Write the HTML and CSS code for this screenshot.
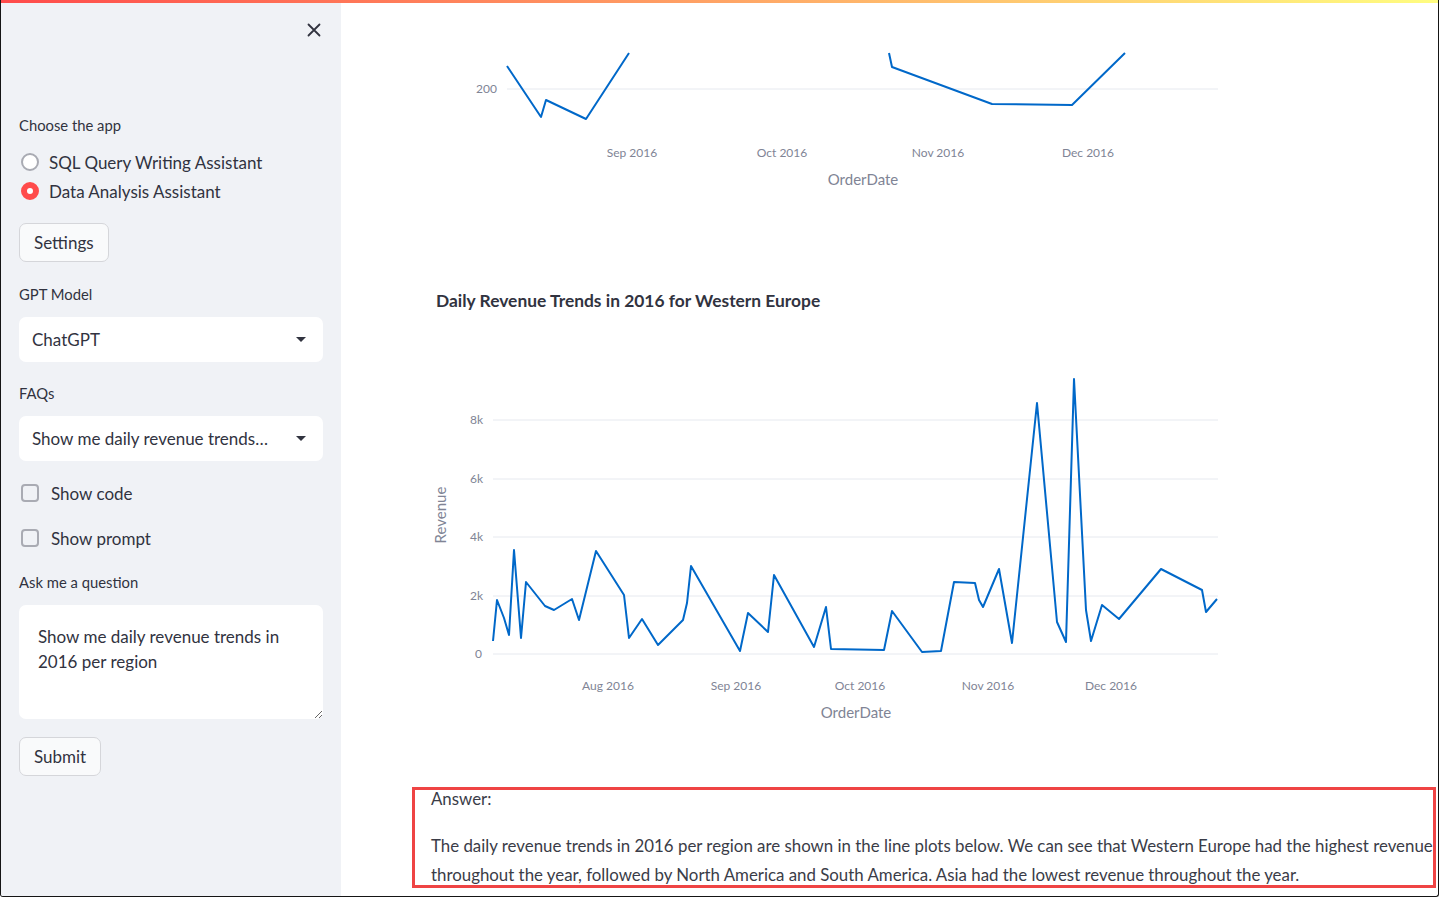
FILE: index.html
```html
<!DOCTYPE html>
<html lang="en">
<head>
<meta charset="utf-8">
<title>Data Analysis Assistant</title>
<link rel="stylesheet" href="styles.css">
</head>
<body>
<div class="frame">
  <div class="topbar"></div>
  <div class="app">
    <aside class="sidebar">
      <div class="sb-head">
        <button class="close" aria-label="Close sidebar">
          <svg width="14" height="14" viewBox="0 0 14 14"><path d="M1.5 1.5 L12.5 12.5 M12.5 1.5 L1.5 12.5" stroke="#31333f" stroke-width="1.8" stroke-linecap="round"/></svg>
        </button>
      </div>
      <div class="label">Choose the app</div>
      <div class="radios">
        <div class="radio"><span class="rdot"></span><span>SQL Query Writing Assistant</span></div>
        <div class="radio on"><span class="rdot"></span><span>Data Analysis Assistant</span></div>
      </div>
      <button class="btn btn-settings">Settings</button>
      <div class="label lbl-gpt">GPT Model</div>
      <div class="select"><span class="sel-text">ChatGPT</span><span class="caret"></span></div>
      <div class="label lbl-faq">FAQs</div>
      <div class="select"><span class="sel-text">Show me daily revenue trends…</span><span class="caret"></span></div>
      <div class="check chk-code"><span class="cbox"></span><span>Show code</span></div>
      <div class="check chk-prompt"><span class="cbox"></span><span>Show prompt</span></div>
      <div class="label lbl-ask">Ask me a question</div>
      <textarea class="ta" readonly>Show me daily revenue trends in 2016 per region</textarea>
      <button class="btn btn-submit">Submit</button>
    </aside>
    <main class="main">
      <svg class="chart chart1" width="820" height="160" viewBox="0 0 820 160">
        <line class="grid" x1="87" y1="49" x2="798" y2="49"/>
        <text class="tick" x="77" y="53" text-anchor="end">200</text>
        <polyline class="series" points="87,26 121,77 126,60 166,79 209,13"/>
        <polyline class="series" points="469,13 472,27 572,64 652,65 705,13"/>
        <text class="tick" x="212" y="117" text-anchor="middle">Sep 2016</text>
        <text class="tick" x="362" y="117" text-anchor="middle">Oct 2016</text>
        <text class="tick" x="518" y="117" text-anchor="middle">Nov 2016</text>
        <text class="tick" x="668" y="117" text-anchor="middle">Dec 2016</text>
        <text class="axis-title" x="443" y="145" text-anchor="middle">OrderDate</text>
      </svg>
      <svg class="chart chart2" width="820" height="460" viewBox="0 0 820 460">
        <text class="chart-title" x="16" y="37">Daily Revenue Trends in 2016 for Western Europe</text>
        <line class="grid" x1="73" y1="150" x2="798" y2="150"/>
        <line class="grid" x1="73" y1="209" x2="798" y2="209"/>
        <line class="grid" x1="73" y1="267" x2="798" y2="267"/>
        <line class="grid" x1="73" y1="326" x2="798" y2="326"/>
        <line class="grid" x1="73" y1="384" x2="798" y2="384"/>
        <text class="tick" x="63" y="154" text-anchor="end">8k</text>
        <text class="tick" x="63" y="213" text-anchor="end">6k</text>
        <text class="tick" x="63" y="271" text-anchor="end">4k</text>
        <text class="tick" x="63" y="330" text-anchor="end">2k</text>
        <text class="tick" x="62" y="388" text-anchor="end">0</text>
        <text class="axis-title" transform="translate(26,245) rotate(-90)" text-anchor="middle">Revenue</text>
        <polyline class="series" points="73,371 77,330 84,348 89,365 94,280 101,368 106,312 125,336 134,340 152,329 159,350 176,281 204,325 209,368 222,349 238,375 263,350 267,333 271,296 320,381 328,343 348,362 354,305 394,377 406,337 411,379 464,380 472,341 502,382 521,381 534,312 555,313 559,330 563,337 579,299 592,373 617,133 637,352 646,372 654,109 666,340 671,371 682,335 699,349 741,299 782,320 786,342 797,329"/>
        <text class="tick" x="188" y="420" text-anchor="middle">Aug 2016</text>
        <text class="tick" x="316" y="420" text-anchor="middle">Sep 2016</text>
        <text class="tick" x="440" y="420" text-anchor="middle">Oct 2016</text>
        <text class="tick" x="568" y="420" text-anchor="middle">Nov 2016</text>
        <text class="tick" x="691" y="420" text-anchor="middle">Dec 2016</text>
        <text class="axis-title" x="436" y="448" text-anchor="middle">OrderDate</text>
      </svg>
      <section class="answer">
        <p class="ans-label">Answer:</p>
        <p class="ans-text">The daily revenue trends in 2016 per region are shown in the line plots below. We can see that Western Europe had the highest revenue<br>throughout the year, followed by North America and South America. Asia had the lowest revenue throughout the year.</p>
      </section>
    </main>
  </div>
</div>
</body>
</html>
```

FILE: styles.css
```css
* { box-sizing: border-box; margin: 0; padding: 0; }
html, body { width: 1439px; height: 897px; overflow: hidden; background: #fff; }
body { font-family: "Lato", "Open Sans", sans-serif; color: #31333f; }

.frame {
  width: 1439px;
  height: 897px;
  border: 1px solid #151515;
  border-top: none;
  border-radius: 0 0 3px 3px;
  display: flex;
  flex-direction: column;
  overflow: hidden;
}
.topbar {
  height: 3px;
  flex: none;
  background: linear-gradient(90deg, rgb(255, 75, 75), rgb(255, 253, 128));
}
.app { flex: 1; display: flex; min-height: 0; }

/* Sidebar */
.sidebar {
  width: 340px;
  flex: none;
  background: #f0f2f6;
  padding: 0 18px;
  display: flex;
  flex-direction: column;
  font-size: 17px;
}
.sb-head { height: 112px; display: flex; justify-content: flex-end; padding-top: 18px; }
.close {
  width: 18px; height: 18px; border: none; background: transparent;
  display: flex; align-items: center; justify-content: center;
}
.label { font-size: 14.8px; line-height: 20px; height: 20px; }
.radios { margin-top: 15px; display: flex; flex-direction: column; gap: 5px; }
.radio, .check { display: flex; align-items: center; height: 24px; }
.rdot {
  width: 18px; height: 18px; border-radius: 50%;
  border: 2px solid #a9abb3; background: #fff;
  margin-left: 2px; margin-right: 10px; flex: none;
}
.radio.on .rdot { border: 6px solid #ff4b4b; background: #fff; }

.btn {
  align-self: flex-start;
  height: 39px;
  padding: 0 14px;
  font: inherit;
  font-size: 17px;
  color: #31333f;
  background: #f9fafb;
  border: 1px solid #d5d6da;
  border-radius: 7px;
}
.btn-settings { margin-top: 20px; }
.lbl-gpt { margin-top: 22px; }
.select {
  margin-top: 13px;
  height: 45px;
  background: #fff;
  border-radius: 7px;
  display: flex;
  align-items: center;
  padding: 0 17px 0 13px;
}
.sel-text { flex: 1; white-space: nowrap; overflow: hidden; }
.caret {
  width: 0; height: 0; flex: none;
  border-left: 5px solid transparent;
  border-right: 5px solid transparent;
  border-top: 5px solid #31333f;
}
.lbl-faq { margin-top: 21px; }
.chk-code { margin-top: 20px; }
.chk-prompt { margin-top: 21px; }
.cbox {
  width: 18px; height: 18px; border-radius: 4px;
  border: 2px solid #a9abb3; background: #f0f2f6;
  margin-left: 2px; margin-right: 12px; flex: none;
}
.lbl-ask { margin-top: 22px; }
.ta {
  margin-top: 13px;
  height: 114px;
  width: 100%;
  border: none;
  outline: none;
  border-radius: 7px;
  background: #fff;
  padding: 19px 19px;
  font: inherit;
  font-size: 17px;
  line-height: 25px;
  color: #31333f;
  resize: vertical;
}
.btn-submit { margin-top: 18px; }

/* Main */
.main {
  flex: 1;
  display: flex;
  flex-direction: column;
  padding-left: 70px;
  padding-top: 37px;
  min-width: 0;
}
.chart { display: block; margin-left: 9px; flex: none; overflow: visible; }
.chart2 { margin-top: 70px; }
.grid { stroke: #e6e9ef; stroke-width: 1; }
.series { fill: none; stroke: #0068c9; stroke-width: 2; stroke-linejoin: round; }
.tick { font-family: "Lato", sans-serif; font-size: 12px; fill: #808495; }
.axis-title { font-family: "Lato", sans-serif; font-size: 15px; fill: #808495; }
.chart-title { font-family: "Lato", sans-serif; font-size: 17.4px; font-weight: 700; fill: #31333f; }

.answer {
  margin: 57px 2px 0 1px;
  height: 101px;
  border: 3px solid #ef4444;
  padding: 0 0 0 16px;
  font-size: 16.85px;
  color: #3a3c47;
}
.ans-label { line-height: 18px; }
.ans-text { margin-top: 23px; line-height: 29px; white-space: nowrap; }
```
